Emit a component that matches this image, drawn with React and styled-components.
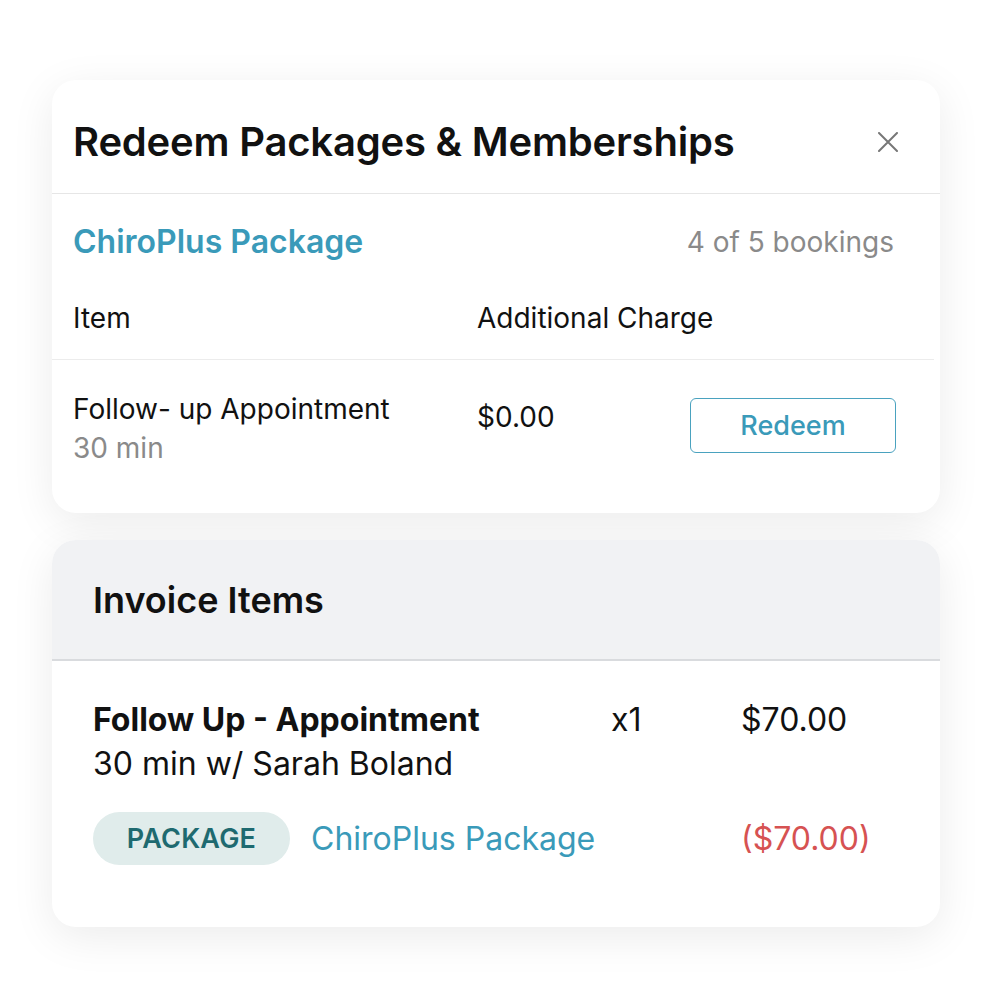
import React from "react";
import styled, { createGlobalStyle } from "styled-components";

const GlobalStyle = createGlobalStyle`
  html, body {
    margin: 0;
    padding: 0;
    background: #ffffff;
    font-family: Inter, "Noto Sans", sans-serif;
    color: #111111;
  }
`;

const Page = styled.div`
  width: 993px;
  height: 1008px;
  padding: 80px 53px 0 52px;
  box-sizing: border-box;
  display: flex;
  flex-direction: column;
  gap: 27px;
`;

const Card = styled.div`
  background: #ffffff;
  border-radius: 24px;
  box-shadow: 0 10px 44px rgba(0, 0, 0, 0.08);
  overflow: hidden;
`;

const ModalHeader = styled.div`
  display: flex;
  align-items: center;
  justify-content: space-between;
  padding: 38px 42px 27px 21px;
  border-bottom: 1px solid #e6e6e6;
`;

const Title = styled.h1`
  margin: 0;
  font-size: 40px;
  line-height: 48px;
  font-weight: 600;
  letter-spacing: -0.2px;
  color: #111;
`;

const CloseButton = styled.button`
  border: 0;
  background: none;
  padding: 0;
  width: 20px;
  height: 20px;
  display: flex;
  color: #777;
  cursor: pointer;
`;

const PackageRow = styled.div`
  display: flex;
  align-items: center;
  justify-content: space-between;
  padding: 29px 46px 0 21px;
`;

const PackageName = styled.h2`
  margin: 0;
  font-size: 32px;
  line-height: 38px;
  font-weight: 600;
  color: #3a9ab9;
`;

const Muted = styled.span`
  font-size: 28px;
  line-height: 38px;
  color: #8a8a8a;
`;

const TableGrid = styled.div`
  display: grid;
  grid-template-columns: 404px 213px 206px;
  align-items: start;
  padding: ${(p) => p.$pad};
  margin-right: ${(p) => (p.$divider ? 6 : 0)}px;
  border-bottom: ${(p) => (p.$divider ? "1px solid #ececec" : "none")};
`;

const HeadCell = styled.div`
  font-size: 28px;
  line-height: 34px;
  color: #111;
  white-space: nowrap;
`;

const Stack = styled.div`
  display: flex;
  flex-direction: column;
`;

const Text = styled.div`
  font-size: ${(p) => p.$size || 28}px;
  line-height: ${(p) => p.$lh || 39}px;
  font-weight: ${(p) => p.$weight || 400};
  color: ${(p) => p.$color || "#111"};
  margin-top: ${(p) => p.$mt || 0}px;
  white-space: nowrap;
`;

const OutlineButton = styled.button`
  margin-top: 8px;
  height: 55px;
  width: 206px;
  border: 1.5px solid #4aa2bf;
  border-radius: 6px;
  background: #fff;
  color: #3a9ab9;
  font-family: Inter, sans-serif;
  font-size: 27px;
  font-weight: 500;
  cursor: pointer;
`;

const SectionHeader = styled.div`
  background: #f1f2f4;
  padding: 38px 41px 37px;
  border-bottom: 2px solid #d9dbde;
`;

const SectionTitle = styled.h2`
  margin: 0;
  font-size: 36px;
  line-height: 44px;
  font-weight: 600;
  color: #111;
`;

const InvoiceBody = styled.div`
  padding: 37px 41px 62px;
`;

const InvoiceGrid = styled.div`
  display: grid;
  grid-template-columns: 518px 130px 1fr;
  align-items: ${(p) => p.$align || "start"};
  margin-top: ${(p) => p.$mt || 0}px;
`;

const BadgeLine = styled.div`
  display: flex;
  align-items: center;
  gap: 21px;
`;

const Badge = styled.span`
  display: inline-flex;
  align-items: center;
  justify-content: center;
  height: 53px;
  width: 197px;
  box-sizing: border-box;
  border-radius: 27px;
  background: #e0eceb;
  color: #1e6a70;
  font-size: 27px;
  font-weight: 600;
  letter-spacing: 0.2px;
`;

const CloseIcon = () => (
  <svg width="20" height="20" viewBox="0 0 20 20" fill="none">
    <path d="M1 1L19 19M19 1L1 19" stroke="currentColor" strokeWidth="2" strokeLinecap="round" />
  </svg>
);

export default function App() {
  return (
    <>
      <GlobalStyle />
      <Page>
        <Card>
          <ModalHeader>
            <Title>Redeem Packages &amp; Memberships</Title>
            <CloseButton aria-label="Close">
              <CloseIcon />
            </CloseButton>
          </ModalHeader>
          <PackageRow>
            <PackageName>ChiroPlus Package</PackageName>
            <Muted>4 of 5 bookings</Muted>
          </PackageRow>
          <TableGrid $pad="40px 0 24px 21px" $divider>
            <HeadCell>Item</HeadCell>
            <HeadCell>Additional Charge</HeadCell>
          </TableGrid>
          <TableGrid $pad="30px 0 45px 21px">
            <Stack>
              <Text>Follow- up Appointment</Text>
              <Text $color="#8a8a8a">30 min</Text>
            </Stack>
            <Text $mt={8}>$0.00</Text>
            <OutlineButton>Redeem</OutlineButton>
          </TableGrid>
        </Card>

        <Card>
          <SectionHeader>
            <SectionTitle>Invoice Items</SectionTitle>
          </SectionHeader>
          <InvoiceBody>
            <InvoiceGrid>
              <Stack>
                <Text $size={32} $lh={44} $weight={700}>Follow Up - Appointment</Text>
                <Text $size={32} $lh={44}>30 min w/ Sarah Boland</Text>
              </Stack>
              <Text $size={32} $lh={44}>x1</Text>
              <Text $size={32} $lh={44}>$70.00</Text>
            </InvoiceGrid>
            <InvoiceGrid $mt={26} $align="center">
              <BadgeLine>
                <Badge>PACKAGE</Badge>
                <Text $size={32} $lh={44} $color="#3a9ab9">ChiroPlus Package</Text>
              </BadgeLine>
              <span />
              <Text $size={32} $lh={44} $color="#d65252">($70.00)</Text>
            </InvoiceGrid>
          </InvoiceBody>
        </Card>
      </Page>
    </>
  );
}
